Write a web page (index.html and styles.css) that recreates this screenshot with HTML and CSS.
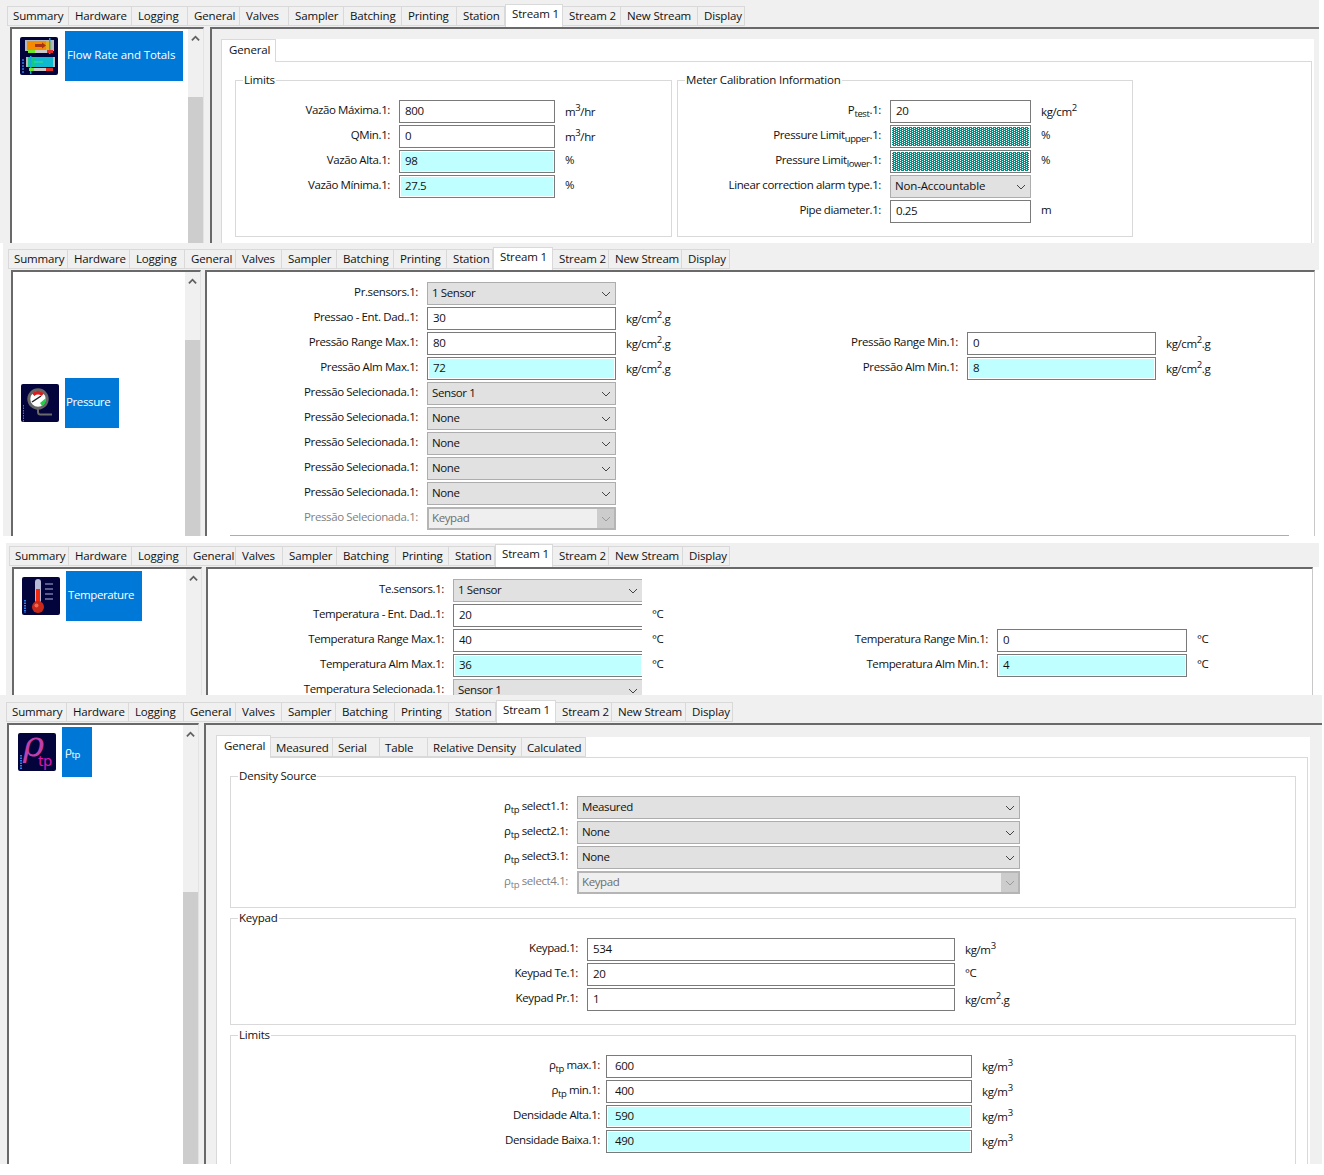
FILE: index.html
```html
<!DOCTYPE html>
<html lang="pt">
  <head>
    <meta charset="UTF-8" />
    <title>Stream 1</title>
    <link rel="stylesheet" href="styles.css">
  </head>
  <body>
    <svg class="defs" width="0" height="0">
      <defs>
        <pattern id="check" width="4" height="2" patternUnits="userSpaceOnUse">
          <rect width="4" height="2" fill="#008f85"/>
          <rect width="1" height="1" fill="#fff"/>
          <rect x="2" y="1" width="1" height="1" fill="#fff"/>
        </pattern>
      </defs>
      <symbol id="chev" viewBox="0 0 10 6"><path d="M1 1l4 4 4-4" fill="none" stroke="currentColor" stroke-width="1"/></symbol>
      <symbol id="up" viewBox="0 0 10 7"><path d="M1 5.500l4-4 4 4" fill="none" stroke="#606060" stroke-width="2"/></symbol>
    </svg>

    <!-- flow rate -->
    <section class="panel panel-flow">
      <div class="tabs">
        <div class="tab">Summary</div><div class="tab">Hardware</div><div class="tab">Logging</div><div class="tab">General</div><div class="tab">Valves</div><div class="tab">Sampler</div><div class="tab">Batching</div><div class="tab">Printing</div><div class="tab">Station</div><div class="tab active">Stream 1</div><div class="tab">Stream 2</div><div class="tab">New Stream</div><div class="tab">Display</div>
      </div>
      <div class="body">
        <aside class="sidebar">
          <div class="list">
            <div class="item">
              <svg class="icon" viewBox="0 0 38 38">
                <rect width="38" height="38" rx="2" fill="#03043c"/>
                <rect x="5" y="3" width="29" height="11" fill="#b8b8b8"/>
                <rect x="7" y="4" width="25" height="9" fill="#f68a00"/>
                <rect x="26" y="4" width="6" height="9" fill="#e0b020"/>
                <path d="M15 7h7V5.500l4 3-4 3V10h-7z" fill="#a5341a"/>
                <rect x="29" y="1" width="1.500" height="16" fill="#17a7e0"/>
                <rect x="8" y="13" width="7" height="3" fill="#6ee62a"/>
                <rect x="15" y="13" width="12" height="3" fill="#c9c9c9"/>
                <rect x="27" y="13" width="6" height="3" fill="#e02a2a"/>
                <rect x="6" y="20" width="29" height="10" fill="#b8b8b8"/>
                <rect x="8" y="20" width="25" height="10" fill="#10b8d0"/>
                <rect x="8" y="20" width="8" height="10" fill="#10c890"/>
                <path d="M14 25h9" stroke="#30e880" stroke-width="1"/>
                <rect x="10" y="19" width="1.500" height="18" fill="#17a7e0"/>
                <rect x="9" y="31" width="5" height="3" fill="#6ee62a"/>
                <rect x="14" y="31" width="12" height="3" fill="#c9c9c9"/>
                <rect x="26" y="31" width="7" height="3" fill="#e02a2a"/>
                <path d="M2 23h2M2 26h2M2 29h2M2 32h2M2 35h2" stroke="#2f7fe8" stroke-width="1.500"/>
              </svg>
              <div class="item-label">Flow Rate and Totals</div>
            </div>
          </div>
          <div class="scroll"><svg class="scroll-up"><use href="#up"/></svg><div class="thumb"></div></div>
        </aside>
        <div class="main">
          <div class="page">
            <div class="subtabs">
              <div class="tab active">General</div>
            </div>
            <div class="tab-body">
              <div class="groups">
                <fieldset class="group group-limits">
                  <legend>Limits</legend>
                  <div class="form form-limits">
                    <span class="label">Vazão Máxima.1:</span><input class="field" value="800"><span class="unit tall">m<sup>3</sup>/hr</span>
                    <span class="label">QMin.1:</span><input class="field" value="0"><span class="unit tall">m<sup>3</sup>/hr</span>
                    <span class="label">Vazão Alta.1:</span><input class="field alarm" value="98"><span class="unit">%</span>
                    <span class="label">Vazão Mínima.1:</span><input class="field alarm" value="27.5"><span class="unit">%</span>
                  </div>
                </fieldset>
                <fieldset class="group group-meter">
                  <legend>Meter Calibration Information</legend>
                  <div class="form form-meter">
                    <span class="label">P<sub>test</sub>.1:</span><input class="field" value="20"><span class="unit tall">kg/cm<sup>2</sup></span>
                    <span class="label">Pressure Limit<sub>upper</sub>.1:</span><div class="field hatched"><svg class="hatch"><rect width="100%" height="100%" fill="url(#check)"/></svg></div><span class="unit">%</span>
                    <span class="label">Pressure Limit<sub>lower</sub>.1:</span><div class="field hatched"><svg class="hatch"><rect width="100%" height="100%" fill="url(#check)"/></svg></div><span class="unit">%</span>
                    <span class="label">Linear correction alarm type.1:</span><div class="combo">Non-Accountable<svg class="chev"><use href="#chev"/></svg></div>
                    <span class="label">Pipe diameter.1:</span><input class="field" value="0.25"><span class="unit">m</span>
                  </div>
                </fieldset>
              </div>
            </div>
          </div>
        </div>
      </div>
    </section>

    <!-- pressure -->
    <section class="panel panel-press">
      <div class="tabs">
        <div class="tab">Summary</div><div class="tab">Hardware</div><div class="tab">Logging</div><div class="tab">General</div><div class="tab">Valves</div><div class="tab">Sampler</div><div class="tab">Batching</div><div class="tab">Printing</div><div class="tab">Station</div><div class="tab active">Stream 1</div><div class="tab">Stream 2</div><div class="tab">New Stream</div><div class="tab">Display</div>
      </div>
      <div class="body">
        <aside class="sidebar">
          <div class="list">
            <div class="item">
              <svg class="icon" viewBox="0 0 38 38">
                <rect width="38" height="38" rx="2" fill="#03043c"/>
                <path d="M17 25v3c0 2 1 2.500 2.500 2.500H31" fill="none" stroke="#6a6a6a" stroke-width="2"/>
                <circle cx="17" cy="15" r="9.200" fill="#fff" stroke="#666" stroke-width="3"/>
                <path d="M11 9.500a8 8 0 0 1 12 0l-2.500 2.500a5 5 0 0 0-7 0z" fill="#d81e1e"/>
                <path d="M25 15a8 8 0 0 1-4 7l-2-3 6-5z" fill="#1fd048"/>
                <path d="M11 18l9-6" stroke="#222" stroke-width="1.500"/>
                <path d="M2.500 21v17" stroke="#2f7fe8" stroke-width="1" stroke-dasharray="1.500 1"/>
              </svg>
              <div class="item-label">Pressure</div>
            </div>
          </div>
          <div class="scroll"><svg class="scroll-up"><use href="#up"/></svg><div class="thumb"></div></div>
        </aside>
        <div class="main">
          <div class="form form-press">
            <span class="label">Pr.sensors.1:</span><div class="combo">1 Sensor<svg class="chev"><use href="#chev"/></svg></div>
            <span class="label">Pressao - Ent. Dad..1:</span><input class="field" value="30"><span class="unit tall">kg/cm<sup>2</sup>.g</span>
            <span class="label">Pressão Range Max.1:</span><input class="field" value="80"><span class="unit tall">kg/cm<sup>2</sup>.g</span>
            <span class="label right">Pressão Range Min.1:</span><input class="field" value="0"><span class="unit tall">kg/cm<sup>2</sup>.g</span>
            <span class="label">Pressão Alm Max.1:</span><input class="field alarm" value="72"><span class="unit tall">kg/cm<sup>2</sup>.g</span>
            <span class="label right">Pressão Alm Min.1:</span><input class="field alarm" value="8"><span class="unit tall">kg/cm<sup>2</sup>.g</span>
            <span class="label">Pressão Selecionada.1:</span><div class="combo">Sensor 1<svg class="chev"><use href="#chev"/></svg></div>
            <span class="label">Pressão Selecionada.1:</span><div class="combo">None<svg class="chev"><use href="#chev"/></svg></div>
            <span class="label">Pressão Selecionada.1:</span><div class="combo">None<svg class="chev"><use href="#chev"/></svg></div>
            <span class="label">Pressão Selecionada.1:</span><div class="combo">None<svg class="chev"><use href="#chev"/></svg></div>
            <span class="label">Pressão Selecionada.1:</span><div class="combo">None<svg class="chev"><use href="#chev"/></svg></div>
            <span class="label off">Pressão Selecionada.1:</span><div class="combo combo-off">Keypad<span class="drop"><svg class="chev"><use href="#chev"/></svg></span></div>
          </div>
          <div class="rule"></div>
        </div>
      </div>
    </section>

    <!-- temperature -->
    <section class="panel panel-temp">
      <div class="tabs">
        <div class="tab">Summary</div><div class="tab">Hardware</div><div class="tab">Logging</div><div class="tab">General</div><div class="tab">Valves</div><div class="tab">Sampler</div><div class="tab">Batching</div><div class="tab">Printing</div><div class="tab">Station</div><div class="tab active">Stream 1</div><div class="tab">Stream 2</div><div class="tab">New Stream</div><div class="tab">Display</div>
      </div>
      <div class="body">
        <aside class="sidebar">
          <div class="list">
            <div class="item">
              <svg class="icon" viewBox="0 0 38 38">
                <rect width="38" height="38" rx="2" fill="#03043c"/>
                <rect x="13" y="2" width="6" height="24" rx="3" fill="#b9b9d8"/>
                <rect x="14" y="12" width="4" height="16" fill="#f02a10"/>
                <circle cx="16" cy="30" r="6" fill="#c8281a"/>
                <circle cx="14.500" cy="28.500" r="2" fill="#ee6a50"/>
                <path d="M23 7h8M23 12h8M23 17h8M23 22h8" stroke="#5a5a8c" stroke-width="2"/>
                <path d="M3 23v13" stroke="#2f7fe8" stroke-width="2" stroke-dasharray="1.500 1"/>
              </svg>
              <div class="item-label">Temperature</div>
            </div>
          </div>
          <div class="scroll"><svg class="scroll-up"><use href="#up"/></svg></div>
        </aside>
        <div class="main">
          <div class="form form-temp">
            <span class="label">Te.sensors.1:</span><div class="combo open">1 Sensor<svg class="chev"><use href="#chev"/></svg></div>
            <span class="label">Temperatura - Ent. Dad..1:</span><input class="field open" value="20"><span class="unit">°C</span>
            <span class="label">Temperatura Range Max.1:</span><input class="field open" value="40"><span class="unit">°C</span>
            <span class="label right">Temperatura Range Min.1:</span><input class="field" value="0"><span class="unit">°C</span>
            <span class="label">Temperatura Alm Max.1:</span><input class="field alarm open" value="36"><span class="unit">°C</span>
            <span class="label right">Temperatura Alm Min.1:</span><input class="field alarm" value="4"><span class="unit">°C</span>
            <span class="label">Temperatura Selecionada.1:</span><div class="combo open">Sensor 1<svg class="chev"><use href="#chev"/></svg></div>
          </div>
        </div>
      </div>
    </section>

    <!-- density -->
    <section class="panel panel-dens">
      <div class="tabs">
        <div class="tab">Summary</div><div class="tab">Hardware</div><div class="tab">Logging</div><div class="tab">General</div><div class="tab">Valves</div><div class="tab">Sampler</div><div class="tab">Batching</div><div class="tab">Printing</div><div class="tab">Station</div><div class="tab active">Stream 1</div><div class="tab">Stream 2</div><div class="tab">New Stream</div><div class="tab">Display</div>
      </div>
      <div class="body">
        <aside class="sidebar">
          <div class="list">
            <div class="item">
              <svg class="icon" viewBox="0 0 38 38">
                <rect width="38" height="38" rx="2" fill="#03043c"/>
                <text class="icon-rho" x="5" y="23">ρ</text>
                <text class="icon-tp" x="20" y="33">tp</text>
                <path d="M3 22v15" stroke="#2f7fe8" stroke-width="2" stroke-dasharray="1.500 1"/>
              </svg>
              <div class="item-label">ρ<sub>tp</sub></div>
            </div>
          </div>
          <div class="scroll"><svg class="scroll-up"><use href="#up"/></svg><div class="thumb"></div></div>
        </aside>
        <div class="main">
          <div class="page">
            <div class="subtabs">
              <div class="tab active">General</div><div class="tab">Measured</div><div class="tab">Serial</div><div class="tab">Table</div><div class="tab">Relative Density</div><div class="tab">Calculated</div>
            </div>
            <div class="tab-body">
              <fieldset class="group group-source">
                <legend>Density Source</legend>
                <div class="form form-source">
                  <span class="label">ρ<sub>tp</sub> select1.1:</span><div class="combo">Measured<svg class="chev"><use href="#chev"/></svg></div>
                  <span class="label">ρ<sub>tp</sub> select2.1:</span><div class="combo">None<svg class="chev"><use href="#chev"/></svg></div>
                  <span class="label">ρ<sub>tp</sub> select3.1:</span><div class="combo">None<svg class="chev"><use href="#chev"/></svg></div>
                  <span class="label off">ρ<sub>tp</sub> select4.1:</span><div class="combo combo-off">Keypad<span class="drop"><svg class="chev"><use href="#chev"/></svg></span></div>
                </div>
              </fieldset>
              <fieldset class="group group-keypad">
                <legend>Keypad</legend>
                <div class="form form-keypad">
                  <span class="label">Keypad.1:</span><input class="field" value="534"><span class="unit tall">kg/m<sup>3</sup></span>
                  <span class="label">Keypad Te.1:</span><input class="field" value="20"><span class="unit">°C</span>
                  <span class="label">Keypad Pr.1:</span><input class="field" value="1"><span class="unit tall">kg/cm<sup>2</sup>.g</span>
                </div>
              </fieldset>
              <fieldset class="group group-dens">
                <legend>Limits</legend>
                <div class="form form-dens">
                  <span class="label">ρ<sub>tp</sub> max.1:</span><input class="field" value="600"><span class="unit tall">kg/m<sup>3</sup></span>
                  <span class="label">ρ<sub>tp</sub> min.1:</span><input class="field" value="400"><span class="unit tall">kg/m<sup>3</sup></span>
                  <span class="label">Densidade Alta.1:</span><input class="field alarm" value="590"><span class="unit tall">kg/m<sup>3</sup></span>
                  <span class="label">Densidade Baixa.1:</span><input class="field alarm" value="490"><span class="unit tall">kg/m<sup>3</sup></span>
                </div>
              </fieldset>
            </div>
          </div>
        </div>
      </div>
    </section>
  </body>
</html>
```

FILE: styles.css
```css
* {
  box-sizing: border-box;
}

body {
  margin: 0;
  background-color: #fff;
  font-family: "Open Sans", "Noto Sans", sans-serif;
  font-size: 11.5px;
  letter-spacing: -0.38px;
  color: #111;
}

.defs {
  display: block;
  height: 0;
}

/* each panel is one captured window */
.panel {
  display: flex;
  flex-direction: column;
  background-color: #f0f0f0;
  overflow: hidden;
}

.panel-flow {
  width: 1319px;
  height: 243px;
  padding-top: 6px;
}

.panel-press {
  width: 1316px;
  height: 293px;
  margin-left: 3px;
  margin-bottom: 7px;
  padding-top: 6px;
}

.panel-temp {
  width: 1313px;
  height: 152px;
  margin-left: 6px;
  padding-top: 3px;
}

.panel-dens {
  width: 1322px;
  height: 469px;
  padding-top: 7px;
}

/* tab strips */
.tabs {
  display: grid;
  flex: none;
  height: 20px;
}

.panel-flow .tabs {
  grid-template-columns: 62px 63px 56px 52px 49px 55px 58px 55px 48px 58px 58px 77px 47px;
  margin-left: 7px;
}

.panel-press .tabs {
  grid-template-columns: 60px 62px 55px 51px 46px 55px 57px 53px 46px 60px 56px 73px 48px;
  margin-left: 5px;
}

.panel-temp .tabs {
  grid-template-columns: 60px 63px 55px 49px 47px 54px 59px 53px 46px 58px 56px 74px 47px;
  margin-left: 3px;
}

.panel-dens .tabs {
  grid-template-columns: 61px 62px 55px 52px 46px 54px 59px 54px 47px 60px 56px 74px 47px;
  margin-left: 6px;
}

.tab {
  height: 20px;
  padding-left: 6px;
  border: 1px solid #d9d9d9;
  border-left: none;
  background-color: #f0f0f0;
  letter-spacing: -0.15px;
  line-height: 17px;
  white-space: nowrap;
}

.tab:first-child {
  padding-left: 5px;
  border-left: 1px solid #d9d9d9;
}

.tab.active {
  position: relative;
  height: 23px;
  margin-top: -2px;
  padding-left: 6px;
  border: 1px solid #d9d9d9;
  border-bottom: none;
  background-color: #fff;
  line-height: 18px;
}

.body {
  display: flex;
  flex: 1;
  min-height: 0;
  padding-top: 1px;
}

/* left list */
.sidebar {
  display: flex;
  flex: none;
  background-color: #fff;
  border-top: 2px solid #696969;
  border-left: 2px solid #696969;
  border-right: 1px solid #e3e3e3;
}

.panel-flow .sidebar {
  width: 194px;
  margin-left: 10px;
}

.panel-press .sidebar {
  width: 190px;
  margin-left: 8px;
}

.panel-temp .sidebar {
  width: 190px;
  margin-left: 6px;
}

.panel-dens .sidebar {
  width: 192px;
  margin-left: 7px;
}

.list {
  flex: 1;
}

.item {
  display: flex;
  align-items: center;
  gap: 6px;
  height: 50px;
  margin-top: 2px;
  padding-left: 8px;
}

.panel-flow .item {
  gap: 7px;
}

.panel-press .item {
  margin-top: 106px;
}

.panel-dens .item {
  padding-left: 9px;
}

.icon {
  flex: none;
  width: 38px;
  height: 38px;
}

.icon-rho {
  font-family: "DejaVu Serif", serif;
  font-style: italic;
  font-size: 36px;
  fill: #c13fa8;
}

.icon-tp {
  font-family: "Noto Sans", sans-serif;
  font-size: 15px;
  fill: #e014b0;
}

.item-label {
  height: 50px;
  padding-left: 2px;
  background-color: #0078d7;
  color: #fff;
  line-height: 48px;
  white-space: nowrap;
}

.panel-flow .item-label {
  width: 118px;
  letter-spacing: -0.1px;
}

.panel-press .item-label {
  width: 54px;
  padding-left: 1px;
}

.panel-temp .item-label {
  width: 76px;
}

.panel-dens .item-label {
  width: 30px;
  padding-left: 3px;
}

.scroll {
  flex: none;
  width: 15px;
  background-color: #f0f0f0;
}

.scroll-up {
  display: block;
  width: 9px;
  height: 7px;
  margin: 6px auto 0;
}

.thumb {
  height: 400px;
  margin-top: 55px;
  background-color: #cdcdcd;
}

.panel-dens .thumb {
  margin-top: 154px;
}

/* right side */
.main {
  flex: none;
  background-color: #fff;
  border-top: 2px solid #696969;
  border-left: 2px solid #696969;
}

.panel-flow .main {
  width: 1109px;
  margin-left: 6px;
  background-color: #f0f0f0;
}

.panel-press .main {
  width: 1110px;
  margin-left: 4px;
  padding-top: 10px;
  border-right: 1px solid #c8c8c8;
  box-shadow: 2px 0 0 #d9d9d9;
}

.panel-temp .main {
  width: 1107px;
  margin-left: 4px;
  padding-top: 10px;
  border-right: 1px solid #c8c8c8;
  box-shadow: 2px 0 0 #d9d9d9;
}

.panel-press .body::after,
.panel-temp .body::after {
  content: "";
  flex: 1;
  background-color: #fff;
}

.panel-dens .main {
  flex: 1;
  margin-left: 5px;
  background-color: #f0f0f0;
}

.page {
  height: 100%;
  margin-top: 10px;
  margin-left: 9px;
  background-color: #fff;
}

.panel-flow .page {
  width: 1093px;
}

.panel-dens .page {
  width: 1094px;
  margin-top: 12px;
  margin-left: 10px;
}

.subtabs {
  display: flex;
  height: 20px;
}

.panel-flow .subtabs {
  height: 22px;
}

.subtabs .tab {
  width: 62px;
  padding-left: 5px;
  line-height: 19px;
}

.subtabs .tab:nth-child(3) { width: 47px; }
.subtabs .tab:nth-child(4) { width: 48px; }
.subtabs .tab:nth-child(5) { width: 94px; }
.subtabs .tab:nth-child(6) { width: 64px; }

.subtabs .tab.active {
  width: 55px;
  padding-left: 7px;
  line-height: 19px;
}

.panel-flow .subtabs .tab.active {
  margin-top: 0;
}

.tab-body {
  height: 100%;
  margin-right: 2px;
  padding: 10px 0 0 13px;
  border: 1px solid #d9d9d9;
  border-bottom: none;
}

.groups {
  display: flex;
  gap: 5px;
}

/* group boxes */
.group {
  margin: 0;
  padding: 12px 0 0;
  border: 1px solid #d9d9d9;
  min-width: 0;
}

.group legend {
  margin-left: 7px;
  padding: 0 1px 0 1px;
  letter-spacing: -0.2px;
  line-height: 16px;
}

.group-limits {
  width: 437px;
  height: 165px;
}

.group-meter {
  width: 456px;
  height: 165px;
}

.group-source,
.group-keypad,
.group-dens {
  width: 1066px;
  margin-bottom: 2px;
}

.group-source {
  height: 140px;
}

.group-keypad {
  height: 115px;
}

.group-dens {
  height: 165px;
}

/* form rows */
.form {
  display: grid;
  grid-auto-rows: 23px;
  row-gap: 2px;
  column-gap: 9px;
}

.form-limits {
  grid-template-columns: 154px 156px auto;
}

.form-meter {
  grid-template-columns: 203px 141px auto;
}

.form-press {
  grid-template-columns: 211px 189px 124px 200px 189px auto;
}

.form-temp {
  grid-template-columns: 236px 189px 129px 199px 190px auto;
}

.form-source {
  grid-template-columns: 337px 443px;
}

.form-keypad {
  grid-template-columns: 347px 368px auto;
}

.form-dens {
  grid-template-columns: 369px 366px auto;
  column-gap: 6px;
}

.form-dens .unit {
  margin-left: 4px;
}

.form-dens .field {
  padding-left: 8px;
}

.form-meter .combo {
  letter-spacing: -0.15px;
}

.label {
  grid-column: 1;
  line-height: 19px;
  text-align: right;
  white-space: nowrap;
}

.label.right {
  grid-column: 4;
}

.label.off {
  color: #7f7f7f;
}

sub {
  font-size: 9.5px;
  line-height: 0;
}

sup {
  font-size: 9.5px;
  line-height: 0;
}

.unit {
  margin-left: 1px;
  line-height: 19px;
  white-space: nowrap;
}

.unit.tall {
  line-height: 23px;
}

.field {
  display: block;
  width: 100%;
  height: 23px;
  margin: 0;
  padding: 0 4px 2px 5px;
  border: 1px solid #7a7a7a;
  border-radius: 0;
  outline: none;
  background-color: #fff;
  color: #111;
  font: inherit;
  letter-spacing: inherit;
}

.field.alarm {
  background-color: #bfffff;
  box-shadow: inset 0 0 0 1px #fff;
}

.field.hatched {
  padding: 1px;
}

.hatch {
  display: block;
  width: 100%;
  height: 100%;
  shape-rendering: crispEdges;
}

.combo {
  display: flex;
  align-items: center;
  justify-content: space-between;
  height: 23px;
  padding: 0 0 2px 4px;
  border: 1px solid #adadad;
  background-color: #e1e1e1;
}

.field.open,
.combo.open {
  border-right: none;
}

.chev {
  flex: none;
  width: 10px;
  height: 6px;
  margin-top: 2px;
  margin-right: 4px;
  color: #444;
}

.combo-off {
  padding: 0 0 2px 3px;
  background-color: #efefef;
  border-width: 2px;
  border-color: #b5b5b5;
  color: #6d6d6d;
}

.drop {
  display: flex;
  align-items: center;
  justify-content: center;
  width: 17px;
  height: 19px;
  margin-bottom: -2px;
  background-color: #ccc;
}

.drop .chev {
  margin: 0;
  color: #9a9a9a;
}

.rule {
  width: 1059px;
  height: 1px;
  margin: 5px 0 0 23px;
  background-color: #adadad;
}
```
